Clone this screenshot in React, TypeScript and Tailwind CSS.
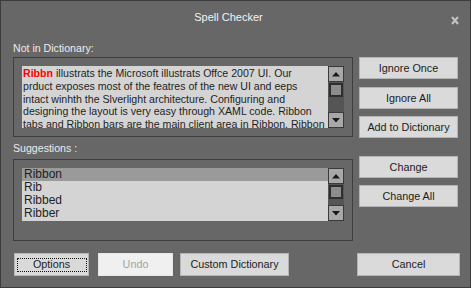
import React from 'react';

const lines = [
  'illustrats the Microsoft illustrats Offce 2007 UI. Our',
  'prduct exposes most of the featres of the new UI and eeps',
  'intact winhth the Slverlight architecture. Configuring and',
  'designing the layout is very easy through XAML code. Ribbon',
  'tabs and Ribbon bars are the main client area in Ribbon. Ribbon',
];

const suggestions = ['Ribbon', 'Rib', 'Ribbed', 'Ribber'];

function Arrow({ down }: { down?: boolean }) {
  return (
    <svg width="8" height="5" viewBox="0 0 8 5">
      {down ? <polygon points="0,0 8,0 4,4.5" fill="#1a1a1a" /> : <polygon points="0,4.5 8,4.5 4,0" fill="#1a1a1a" />}
    </svg>
  );
}

function ScrollBar() {
  return (
    <div className="w-[16px] h-full flex flex-col bg-[#555555]">
      <div className="h-[16px] border border-[#3a3a3a] bg-[#a8a8a8] flex items-center justify-center">
        <Arrow />
      </div>
      <div className="flex-1 flex flex-col">
        <div className="mt-[1px] mx-[1px] h-[14px] border-2 border-[#2e2e2e] bg-[#8c8c8c]" />
      </div>
      <div className="h-[16px] border border-[#3a3a3a] bg-[#a8a8a8] flex items-center justify-center">
        <Arrow down />
      </div>
    </div>
  );
}

function Btn({ label, className = '', disabled }: { label: string; className?: string; disabled?: boolean }) {
  return (
    <button
      className={
        'h-[22px] border flex items-center justify-center text-[10.8px] ' +
        (disabled ? 'border-[#e6e6e6] bg-[#f0f0f0] text-[#a3a3a3] ' : 'border-[#b4b4b4] bg-[#dadada] text-[#1c1c1c] ') +
        className
      }
    >
      {label}
    </button>
  );
}

export default function App() {
  return (
    <div className="w-[472px] h-[293px] bg-white font-['Liberation_Sans',Arial,sans-serif]">
      <div className="w-[471px] h-[288px] border border-[#3c3c3c] bg-[#676767] flex flex-col">
        <div className="h-[36px] relative flex items-center justify-center pr-[14px] pb-[4px] text-[11px] text-[#f2f2f2]">
          Spell Checker
          <svg className="absolute left-[450px] top-[15px]" width="8" height="9" viewBox="0 0 8 9">
            <path d="M1 1 L7 8 M7 1 L1 8" stroke="#c4c4c4" strokeWidth="2" />
          </svg>
        </div>

        <div className="flex px-[12px] gap-[6px]">
          <div className="w-[340px] flex flex-col">
            <div className="h-[20px] pt-[5px] text-[10.6px] leading-[13px] text-[#ececec]">Not in Dictionary:</div>
            <div className="h-[80px] border border-[#3e3e3e] px-[8px] pt-[8px] pb-[8px] flex">
              <div className="w-[306px] h-full bg-[#d4d4d4] overflow-hidden pl-[1px] pt-[1px] text-[10.6px] leading-[12.75px] text-[#1e1e1e]">
                {lines.map((l, i) => (
                  <div key={i} className="whitespace-nowrap">
                    {i === 0 && <span className="font-bold text-[#ff0000]">Ribbn </span>}
                    {l}
                  </div>
                ))}
              </div>
              <ScrollBar />
            </div>

            <div className="h-[22px] pt-[5px] text-[10.6px] leading-[13px] text-[#ececec]">Suggestions :</div>
            <div className="h-[82px] border border-[#3e3e3e] px-[8px] pt-[8px] pb-[19px] flex">
              <div className="w-[306px] h-full bg-[#d4d4d4] overflow-hidden text-[12px] leading-[13px] text-[#1e1e1e]">
                {suggestions.map((s, i) => (
                  <div key={s} className={'pl-[2px] h-[13px] ' + (i === 0 ? 'bg-[#9a9a9a]' : '')}>
                    {s}
                  </div>
                ))}
              </div>
              <ScrollBar />
            </div>
          </div>

          <div className="w-[102px] flex flex-col pt-[20px]">
            <Btn label="Ignore Once" />
            <Btn label="Ignore All" className="mt-[8px]" />
            <Btn label="Add to Dictionary" className="mt-[7px]" />
            <Btn label="Change" className="mt-[18px]" />
            <Btn label="Change All" className="mt-[7px]" />
          </div>
        </div>

        <div className="flex items-center px-[13px] mt-[12px]">
          <div className="relative">
            <Btn label="Options" className="w-[75px] h-[23px]" />
            <div className="absolute left-[3px] right-[2px] top-[5px] bottom-[4px] border border-dotted border-[#111]" />
          </div>
          <Btn label="Undo" disabled className="w-[75px] h-[23px] ml-[9px]" />
          <Btn label="Custom Dictionary" className="w-[109px] h-[23px] ml-[7px]" />
          <Btn label="Cancel" className="w-[103px] h-[23px] ml-auto mr-[-3px]" />
        </div>
      </div>
    </div>
  );
}
